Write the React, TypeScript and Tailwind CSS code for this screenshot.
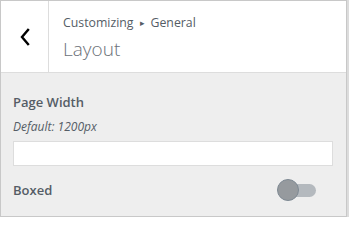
export default function App() {
  return (
    <div className="flex h-[217px] w-[349px] font-['Open_Sans',sans-serif] text-[#555d66]">
      <div className="flex flex-1 flex-col border border-[#c8c8c8] bg-[#eeeeee]">
        {/* Section header */}
        <header className="flex h-[72px] shrink-0 border-b border-[#dddddd] bg-white">
          <button className="flex w-[48px] shrink-0 items-center justify-center border-r border-[#dddddd] text-black">
            <svg width="12" height="18" viewBox="0 0 12 18" fill="none" stroke="currentColor" strokeWidth="2.4" strokeLinecap="square">
              <path d="M9 2 L3 9 L9 16" />
            </svg>
          </button>
          <div className="flex flex-col pl-[14px] pt-[14px]">
            <span className="text-[12.3px] leading-[16px]">
              Customizing<span className="relative -top-[1px] mx-[6px] text-[9px]">▸</span>General
            </span>
            <h3 className="mt-[5px] text-[19px] font-light leading-[24px] text-[#6b7178]">Layout</h3>
          </div>
        </header>

        {/* Controls */}
        <div className="flex flex-col px-[12px] pt-[20px]">
          <label className="text-[13px] font-semibold leading-[18px]">Page Width</label>
          <span className="mt-[8px] text-[12px] italic leading-[16px]">Default: 1200px</span>
          <input
            type="text"
            className="mt-[6px] h-[25px] w-[320px] border border-[#dddddd] bg-white outline-none"
          />
          <div className="mt-[15px] flex items-center justify-between pr-[18px]">
            <span className="text-[13px] font-semibold leading-[18px]">Boxed</span>
            <div className="relative h-[13px] w-[34px] rounded-full bg-[#b4b9be]">
              <span className="absolute left-[-5px] top-[-5px] h-[22px] w-[22px] rounded-full border border-[#7e8993] bg-[#969a9e]" />
            </div>
          </div>
        </div>
      </div>
      <div className="w-[2px] bg-[#dcdcdc]" />
    </div>
  );
}
